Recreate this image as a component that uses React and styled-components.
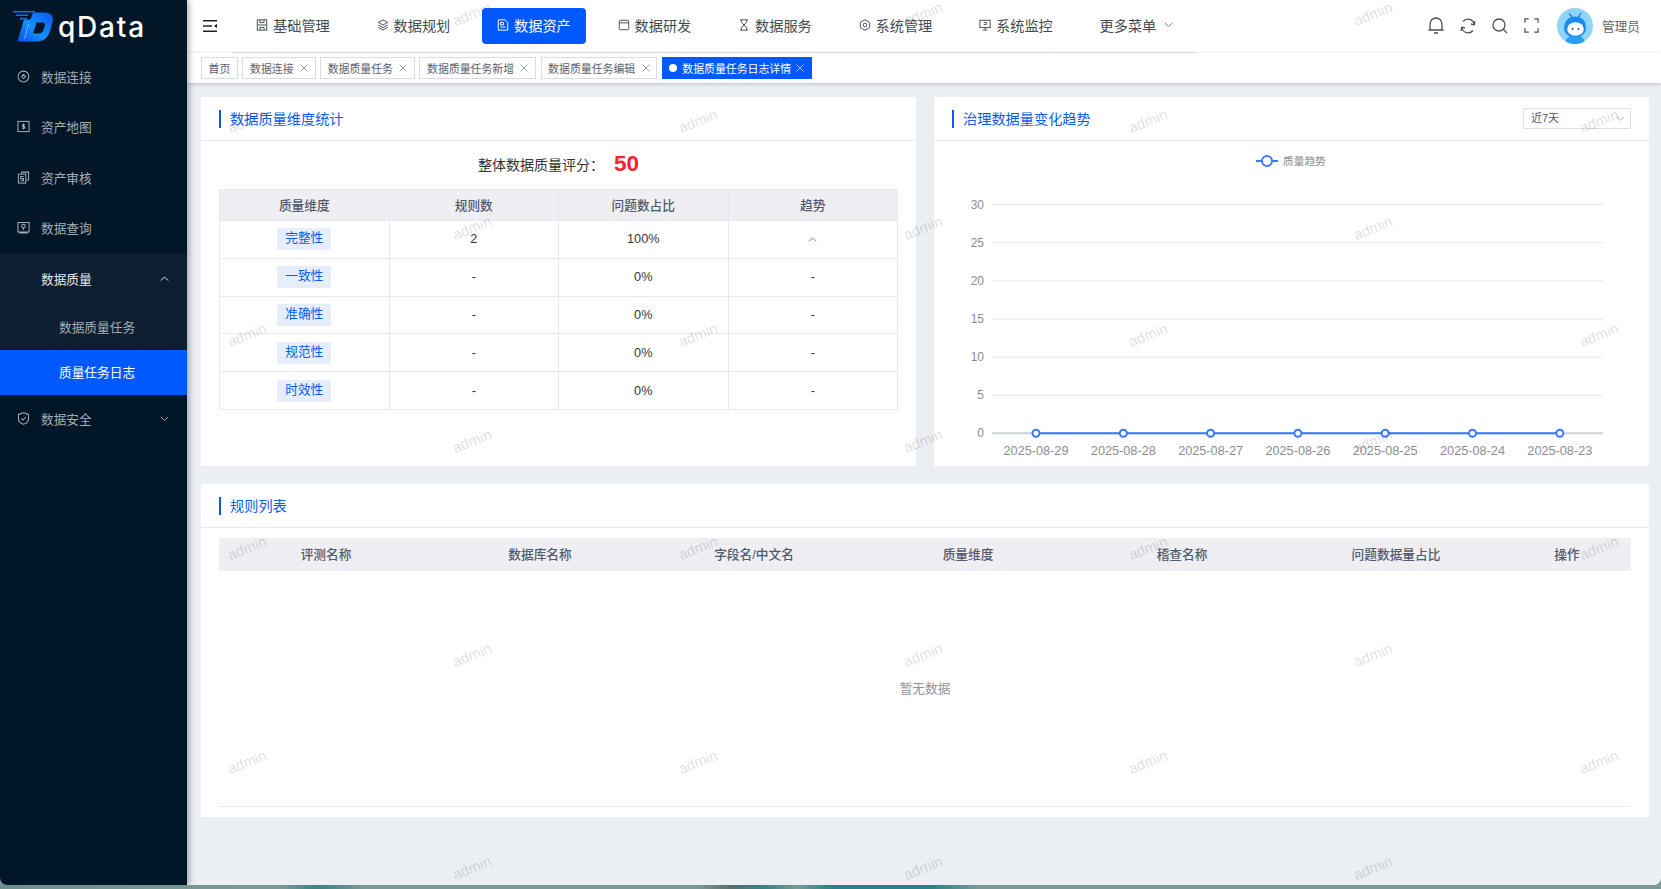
import styled, { createGlobalStyle } from "styled-components"

const GlobalStyle = createGlobalStyle`
  html, body {
    margin: 0;
    padding: 0;
    height: 889px;
    overflow: hidden;
    background: linear-gradient(90deg, #6f8f8d 0%, #7b9997 17%, #3f7f82 19%, #7b9997 22%, #7b9997 42%, #5d6f70 44%, #3a8087 46%, #7b9997 48%, #2f7f88 50%, #2f7f88 56%, #7b9997 59%, #7b9997 100%);
  }
  * { box-sizing: border-box; }
  body {
    font-family: "Liberation Sans", "Noto Sans CJK SC", sans-serif;
    color: #515a6e;
  }
`

const sideMenus = [
  { name: "数据连接", icon: "link" },
  { name: "资产地图", icon: "map" },
  { name: "资产审核", icon: "audit" },
  { name: "数据查询", icon: "query" },
]

const navItems = [
  { name: "基础管理", icon: "disk" },
  { name: "数据规划", icon: "layers" },
  { name: "数据资产", icon: "asset", active: true },
  { name: "数据研发", icon: "panel" },
  { name: "数据服务", icon: "hourglass" },
  { name: "系统管理", icon: "hex" },
  { name: "系统监控", icon: "monitor" },
]

const tabs = ["数据连接", "数据质量任务", "数据质量任务新增", "数据质量任务编辑"]

const dimensions = [
  { name: "完整性", rules: "2", ratio: "100%", up: true },
  { name: "一致性", rules: "-", ratio: "0%" },
  { name: "准确性", rules: "-", ratio: "0%" },
  { name: "规范性", rules: "-", ratio: "0%" },
  { name: "时效性", rules: "-", ratio: "0%" },
]

const ruleColumns = ["评测名称", "数据库名称", "字段名/中文名", "质量维度", "稽查名称", "问题数据量占比", "操作"]

const dates = ["2025-08-29", "2025-08-28", "2025-08-27", "2025-08-26", "2025-08-25", "2025-08-24", "2025-08-23"]

const iconPaths = {
  link: (
    <>
      <circle cx="7" cy="7" r="5.8" />
      <path d="M7 4.8 9.2 7 7 9.2 4.8 7Z" />
    </>
  ),
  map: (
    <>
      <rect x="1" y="1.5" width="12" height="11" />
      <path d="M8.6 5H6.2v2h2v2H5.6M7 3.8v6.4" />
    </>
  ),
  audit: (
    <>
      <path d="M5 3V1.2h7.5v8.6H10" />
      <rect x="1.5" y="3.4" width="8" height="9.6" />
      <path d="M7.2 6H4v2.2h3v2.3H3.8" />
    </>
  ),
  query: (
    <>
      <path d="M1 1.5h12v10.4H1ZM2.5 13h9" />
      <circle cx="7" cy="5.5" r="1.9" />
      <path d="M7 7.4v2.4" />
    </>
  ),
  shield: (
    <>
      <path d="M7 .9 12.4 2.6v4.6c0 3-2.4 4.9-5.4 6C4 12.1 1.6 10.2 1.6 7.2V2.6Z" />
      <path d="M4.6 6.8 6.5 8.7 9.6 5.4" />
    </>
  ),
  disk: (
    <>
      <rect x="1.5" y="1" width="11" height="12" />
      <path d="M1.5 7h11M4.6 1v3h4.8V1M4.6 13V9.8h4.8V13" />
    </>
  ),
  layers: (
    <>
      <path d="M7 1 12.5 4 7 7 1.5 4Z" />
      <path d="M1.5 7 7 10 12.5 7M1.5 9.8 7 12.8 12.5 9.8" />
    </>
  ),
  asset: (
    <>
      <path d="M1.5 1h8l3 3v9h-11Z" />
      <path d="M4 4h3.5v3H4ZM4 9.5h6" />
    </>
  ),
  panel: (
    <>
      <rect x="1.5" y="1.5" width="11" height="11" rx="1" />
      <path d="M1.5 4.5h11" />
    </>
  ),
  hourglass: <path d="M2.5 1h9M2.5 13h9M3.8 1v2.5L7 7l3.2-3.5V1M3.8 13v-2.5L7 7l3.2 3.5V13" />,
  hex: (
    <>
      <path d="M7 .8 12.5 4v6L7 13.2 1.5 10V4Z" />
      <circle cx="7" cy="7" r="2.2" />
    </>
  ),
  monitor: (
    <>
      <rect x="1" y="1.5" width="12" height="8.5" />
      <path d="M7 10v2.5M4 12.8h6M5.5 4h3v2.5h-3" />
    </>
  ),
}

function Icon({ name, size = 14 }) {
  return (
    <IconSvg viewBox="0 0 14 14" width={size} height={size}>
      {iconPaths[name]}
    </IconSvg>
  )
}

function Chevron({ up, size = 9 }) {
  return (
    <IconSvg viewBox="0 0 10 6" width={size} height={size * 0.6}>
      <path d={up ? "M1 5 5 1 9 5" : "M1 1 5 5 9 1"} />
    </IconSvg>
  )
}

function Cross() {
  return (
    <CrossSvg viewBox="0 0 8 8" width={8} height={8}>
      <path d="M.6.6 7.4 7.4M7.4.6.6 7.4" />
    </CrossSvg>
  )
}

function Logo() {
  return (
    <svg viewBox="0 0 42 32" width="42" height="32">
      <defs>
        <linearGradient id="logoBlue" x1="0" y1="1" x2="1" y2="0">
          <stop offset="0" stopColor="#0a4df0" />
          <stop offset="0.45" stopColor="#1492ff" />
          <stop offset="1" stopColor="#0a55ee" />
        </linearGradient>
      </defs>
      <path d="M0 0h22v1.6H0ZM3 3.4h12v1.6H3ZM7 6.8h7v1.6H7Z" fill="#1668f5" />
      <path
        fillRule="evenodd"
        fill="url(#logoBlue)"
        d="M11 8.5H17.5L20 1.5H31C38 1.5 41 5 39.5 11L37 20C35 27 30 30.5 24 30.5H4.5ZM23.5 11.5H29.5C31.5 11.5 32.5 12.5 32 14.5L30.5 19C29.8 21 28 22.5 26 22.5H20Z"
      />
      <path d="M15.5 13 11.5 28" stroke="#63b8ff" strokeWidth="1" fill="none" />
    </svg>
  )
}

function Avatar() {
  return (
    <AvatarSvg viewBox="0 0 36 36" width="36" height="36">
      <rect width="36" height="36" fill="#8ed4fb" />
      <path d="M8 36c0-6 5-9 10-9s10 3 10 9Z" fill="#2b9df2" />
      <path d="M12 5.5 15 9M24 5 21.5 9" stroke="#1276d8" strokeWidth="1.2" fill="none" />
      <path d="M7 20c0-7 5-11.5 11-11.5S29 12 29 20c0 6-5 9-11 9S7 26 7 20Z" fill="#1b8cee" />
      <ellipse cx="18.5" cy="21" rx="8.3" ry="6.8" fill="#fff" />
      <circle cx="15.5" cy="21" r="0.9" fill="#23405e" />
      <circle cx="21.5" cy="21" r="0.9" fill="#23405e" />
    </AvatarSvg>
  )
}

function TrendChart() {
  const yTicks = [30, 25, 20, 15, 10, 5, 0]
  const left = 58
  const right = 669
  const zeroY = 292.3
  const step = 38.1
  const firstX = 102
  const gapX = 87.3
  const points = dates.map((d, i) => firstX + i * gapX)

  return (
    <ChartSvg viewBox="0 0 715 325" width="715" height="325">
      <path d="M322 20H344" stroke="#3a78ff" strokeWidth="2" />
      <circle cx="333" cy="20" r="5" fill="#fff" stroke="#3a78ff" strokeWidth="2" />
      <ChartText x="349" y="24" fontSize="10.7">质量趋势</ChartText>
      {yTicks.map((tick, i) => {
        const y = zeroY - (6 - i) * step
        return (
          <g key={tick}>
            <line x1={left} x2={right} y1={y} y2={y} stroke={tick === 0 ? "#ccd0d6" : "#e3e7f1"} strokeWidth={tick === 0 ? 2 : 1} />
            <ChartText x={left - 8} y={y + 4} fontSize="12" textAnchor="end">{tick}</ChartText>
          </g>
        )
      })}
      <line x1={firstX} x2={points[6]} y1={zeroY} y2={zeroY} stroke="#3a78ff" strokeWidth="2" />
      {points.map((x, i) => (
        <g key={dates[i]}>
          <circle cx={x} cy={zeroY} r="3.5" fill="#fff" stroke="#3a78ff" strokeWidth="2" />
          <ChartText x={x} y={zeroY + 22} fontSize="12.7" textAnchor="middle">{dates[i]}</ChartText>
        </g>
      ))}
    </ChartSvg>
  )
}

function App() {
  const markRows = Array.from({ length: 9 }, (_, i) => i)

  return (
    <>
      <GlobalStyle />
      <StWindow>
        <StSidebar>
          <StLogoRow>
            <Logo />
            <StLogoText>qData</StLogoText>
          </StLogoRow>
          {sideMenus.map((menu) => (
            <StMenuItem key={menu.name}>
              <Icon name={menu.icon} size={13} />
              <span>{menu.name}</span>
            </StMenuItem>
          ))}
          <StMenuGroup>
            <StMenuItem $open>
              <StIconGap />
              <span>数据质量</span>
              <StMenuArrow><Chevron up /></StMenuArrow>
            </StMenuItem>
            <StSubItem>数据质量任务</StSubItem>
            <StSubItem $active>质量任务日志</StSubItem>
          </StMenuGroup>
          <StMenuItem>
            <Icon name="shield" size={13} />
            <span>数据安全</span>
            <StMenuArrow><Chevron /></StMenuArrow>
          </StMenuItem>
        </StSidebar>

        <StMain>
          <StHeader>
            <StToggle>
              <svg viewBox="0 0 14 12" width="14" height="12">
                <path d="M0 .75h14M0 6h9M0 11.25h14" stroke="#1f2329" strokeWidth="1.5" />
                <path d="M14 3.8 11 6l3 2.2Z" fill="#1f2329" />
              </svg>
            </StToggle>
            <StNav>
              {navItems.map((item) => (
                <StNavItem key={item.name} $active={item.active}>
                  <Icon name={item.icon} size={12} />
                  <span>{item.name}</span>
                </StNavItem>
              ))}
              <StNavItem>
                <span>更多菜单</span>
                <StMoreArrow><Chevron /></StMoreArrow>
              </StNavItem>
            </StNav>
            <StTools>
              <StToolIcon>
                <svg viewBox="0 0 16 17" width="16" height="17">
                  <path d="M2 13V7a6 6 0 0 1 12 0v6M.5 13h15M6 16h4" />
                </svg>
              </StToolIcon>
              <StToolIcon>
                <svg viewBox="0 0 16 16" width="16" height="16">
                  <path d="M3 3.5A6.5 6.5 0 0 1 14.3 6.5M13 12.5A6.5 6.5 0 0 1 1.7 9.5" />
                  <path d="M14.8 3.2 14.3 6.8 11 6M1.2 12.8 1.7 9.2 5 10" />
                </svg>
              </StToolIcon>
              <StToolIcon>
                <svg viewBox="0 0 16 16" width="16" height="16">
                  <circle cx="7" cy="7" r="6" />
                  <path d="M11.5 11.5 15 15" />
                </svg>
              </StToolIcon>
              <StToolIcon>
                <svg viewBox="0 0 16 16" width="15" height="15">
                  <path d="M1 5V1h4M11 1h4v4M15 11v4h-4M5 15H1v-4" />
                </svg>
              </StToolIcon>
              <Avatar />
              <StUserName>管理员</StUserName>
            </StTools>
          </StHeader>

          <StTabBar>
            <StTab>首页</StTab>
            {tabs.map((tab) => (
              <StTab key={tab}>
                {tab}
                <Cross />
              </StTab>
            ))}
            <StTab $active>
              <StTabDot />
              数据质量任务日志详情
              <Cross />
            </StTab>
          </StTabBar>

          <StContent>
            <StTopRow>
              <StCard>
                <StCardHead>
                  <StCardTitle>数据质量维度统计</StCardTitle>
                </StCardHead>
                <StScoreRow>
                  整体数据质量评分：
                  <StScore>50</StScore>
                </StScoreRow>
                <StTableWrap>
                  <StDimTable>
                    <thead>
                      <tr>
                        <th>质量维度</th>
                        <th>规则数</th>
                        <th>问题数占比</th>
                        <th>趋势</th>
                      </tr>
                    </thead>
                    <tbody>
                      {dimensions.map((row) => (
                        <tr key={row.name}>
                          <td><StDimTag>{row.name}</StDimTag></td>
                          <td>{row.rules}</td>
                          <td>{row.ratio}</td>
                          <td>{row.up ? <StTrendUp><Chevron up size={9} /></StTrendUp> : "-"}</td>
                        </tr>
                      ))}
                    </tbody>
                  </StDimTable>
                </StTableWrap>
              </StCard>

              <StCard>
                <StCardHead>
                  <StCardTitle>治理数据量变化趋势</StCardTitle>
                  <StSelect>
                    近7天
                    <StSelectArrow><Chevron size={9} /></StSelectArrow>
                  </StSelect>
                </StCardHead>
                <TrendChart />
              </StCard>
            </StTopRow>

            <StRuleCard>
              <StCardHead>
                <StCardTitle>规则列表</StCardTitle>
              </StCardHead>
              <StRuleHead>
                {ruleColumns.map((col) => (
                  <div key={col}>{col}</div>
                ))}
              </StRuleHead>
              <StEmpty>暂无数据</StEmpty>
            </StRuleCard>
          </StContent>

          <StWatermarks>
            {markRows.map((row) => (
              <StMarkRow key={row} $shifted={row % 2 === 1}>
                {Array.from({ length: row % 2 === 1 ? 4 : 3 }, (_, col) => (
                  <StMark key={col}><span>admin</span></StMark>
                ))}
              </StMarkRow>
            ))}
          </StWatermarks>
        </StMain>
      </StWindow>
    </>
  )
}

export default App

const IconSvg = styled.svg`
  flex: none;
  fill: none;
  stroke: currentColor;
  stroke-width: 1.1;
`

const CrossSvg = styled.svg`
  flex: none;
  fill: none;
  stroke: currentColor;
  stroke-width: 0.8;
  opacity: 0.8;
`

const AvatarSvg = styled.svg`
  flex: none;
  border-radius: 50%;
  margin-left: 2px;
`

const ChartSvg = styled.svg`
  display: block;
`

const ChartText = styled.text`
  fill: #8a8d93;
  font-family: "Liberation Sans", "Noto Sans CJK SC", sans-serif;
`

const StWindow = styled.div`
  display: flex;
  width: 1661px;
  height: 885px;
  overflow: hidden;
  border-radius: 0 0 7px 7px;
  background: #ebeef2;
`

const StSidebar = styled.aside`
  flex: none;
  width: 187px;
  background: #011627;
  box-shadow: 2px 0 6px rgba(0, 21, 41, 0.35);
  color: #a5acb4;
  font-size: 12.7px;
  z-index: 2;
`

const StLogoRow = styled.div`
  display: flex;
  align-items: center;
  height: 52px;
  padding: 2px 0 0 13px;
`

const StLogoText = styled.div`
  margin: -1px 0 0 3px;
  color: #fff;
  font-family: Inter, sans-serif;
  font-size: 28px;
  font-weight: 500;
  letter-spacing: 1.8px;
`

const StMenuItem = styled.div`
  display: flex;
  align-items: center;
  gap: 11px;
  height: 50.5px;
  padding: 0 18px 2px 17px;
  color: ${(props) => (props.$open ? "#e6e8eb" : "#a5acb4")};
`

const StIconGap = styled.span`
  width: 13px;
`

const StMenuArrow = styled.span`
  display: flex;
  margin-left: auto;
`

const StMenuGroup = styled.div`
  background: #0c1e2f;
`

const StSubItem = styled.div`
  display: flex;
  align-items: center;
  height: 45px;
  padding: 0 0 2px 59px;
  background: ${(props) => (props.$active ? "#0059ff" : "transparent")};
  color: ${(props) => (props.$active ? "#fff" : "#a5acb4")};
`

const StMain = styled.main`
  position: relative;
  flex: 1;
  min-width: 0;
  display: flex;
  flex-direction: column;
`

const StHeader = styled.header`
  display: flex;
  height: 53px;
  padding-left: 16px;
  background: #fff;
  box-shadow: 0 1px 2px rgba(0, 21, 41, 0.05);
`

const StToggle = styled.div`
  display: flex;
  align-items: center;
  width: 29px;
  padding-bottom: 1px;
`

const StNav = styled.nav`
  display: flex;
  gap: 16.5px;
  width: 964px;
  padding: 8px 0 0 9px;
  border-bottom: 1px solid #dcdfe6;
`

const StNavItem = styled.div`
  display: flex;
  align-items: center;
  gap: 5px;
  width: 104px;
  height: 36px;
  padding: 0 0 2px 15px;
  border-radius: 4px;
  background: ${(props) => (props.$active ? "#0059ff" : "transparent")};
  color: ${(props) => (props.$active ? "#fff" : "#444a52")};
  font-size: 14.2px;
  white-space: nowrap;
`

const StMoreArrow = styled.span`
  display: flex;
  margin-left: 3px;
  color: #888;
`

const StTools = styled.div`
  display: flex;
  align-items: center;
  gap: 16px;
  margin-left: auto;
  padding: 0 21px 2px 0;
`

const StToolIcon = styled.div`
  display: flex;
  color: #4a4f57;

  svg {
    fill: none;
    stroke: currentColor;
    stroke-width: 1.3;
  }
`

const StUserName = styled.div`
  margin-left: -7px;
  color: #5f6570;
  font-size: 12.7px;
`

const StTabBar = styled.div`
  display: flex;
  align-items: center;
  gap: 4.5px;
  height: 30px;
  padding: 0 14px;
  background: #fff;
  box-shadow: 0 1px 4px rgba(0, 21, 41, 0.22);
  z-index: 1;
`

const StTab = styled.div`
  display: flex;
  align-items: center;
  gap: ${(props) => (props.$active ? "5px" : "6.3px")};
  height: 22px;
  padding: 0 6.6px;
  border: 1px solid ${(props) => (props.$active ? "#0059ff" : "#d8dce5")};
  background: ${(props) => (props.$active ? "#0059ff" : "#fff")};
  color: ${(props) => (props.$active ? "#fff" : "#5a6170")};
  font-size: 10.9px;
  white-space: nowrap;
`

const StTabDot = styled.span`
  width: 8px;
  height: 8px;
  border-radius: 50%;
  background: #fff;
`

const StContent = styled.div`
  display: flex;
  flex-direction: column;
  gap: 18px;
  padding: 14px 12px 0 14px;
`

const StTopRow = styled.div`
  display: grid;
  grid-template-columns: 715px 715px;
  gap: 18px;
`

const StCard = styled.section`
  height: 369px;
  background: #fff;
`

const StCardHead = styled.div`
  display: flex;
  align-items: center;
  justify-content: space-between;
  height: 44px;
  padding: 0 18px;
  border-bottom: 1px solid #e8eaec;
`

const StCardTitle = styled.div`
  padding-left: 9px;
  border-left: 2px solid #0059ff;
  color: #0a5cf5;
  font-size: 14.2px;
  line-height: 18px;
`

const StSelect = styled.div`
  position: relative;
  width: 108px;
  height: 21px;
  padding-left: 7px;
  border: 1px solid #dcdee2;
  border-radius: 2px;
  color: #515a6e;
  font-size: 11px;
  line-height: 19px;
`

const StSelectArrow = styled.span`
  display: flex;
  position: absolute;
  top: 7px;
  right: 5px;
  color: #b5b9c0;
`

const StScoreRow = styled.div`
  display: flex;
  align-items: center;
  justify-content: center;
  height: 48px;
  padding-bottom: 2px;
  color: #333;
  font-size: 14px;
`

const StScore = styled.span`
  margin-left: 10px;
  color: #ff1f2f;
  font-size: 22.5px;
  font-weight: 700;
`

const StTableWrap = styled.div`
  padding: 0 18px;
`

const StDimTable = styled.table`
  width: 100%;
  border-collapse: collapse;
  table-layout: fixed;
  font-size: 12.7px;
  text-align: center;

  th, td {
    border: 1px solid #e6e8f2;
    padding: 0;
  }

  th {
    height: 31px;
    padding-bottom: 1px;
    background: #eeeef3;
    color: #515a6e;
    font-weight: 500;
  }

  td {
    height: 37.8px;
    color: #33373d;
  }
`

const StDimTag = styled.span`
  display: inline-block;
  width: 54px;
  height: 22px;
  border-radius: 2px;
  background: #e6edfc;
  color: #0a5cf5;
  line-height: 21px;
  vertical-align: middle;
`

const StTrendUp = styled.span`
  display: inline-flex;
  vertical-align: middle;
  color: #3fa45a;
`

const StRuleCard = styled.section`
  display: flex;
  flex-direction: column;
  height: 333px;
  padding-bottom: 10px;
  background: #fff;
`

const StRuleHead = styled.div`
  display: grid;
  grid-template-columns: repeat(6, 214px) 128px;
  align-items: center;
  height: 33px;
  margin: 10px 18px 0;
  padding-bottom: 3px;
  background: #eeeef3;
  color: #515a6e;
  font-size: 12.7px;
  font-weight: 500;
  text-align: center;
`

const StEmpty = styled.div`
  flex: 1;
  display: flex;
  align-items: center;
  justify-content: center;
  margin: 0 18px;
  padding-bottom: 2px;
  border-bottom: 1px solid #e8eaec;
  color: #909399;
  font-size: 12.7px;
`

const StWatermarks = styled.div`
  position: absolute;
  inset: 0;
  z-index: 3;
  overflow: hidden;
  pointer-events: none;
`

const StMarkRow = styled.div`
  display: flex;
  align-items: center;
  height: 106.75px;
  padding-left: ${(props) => (props.$shifted ? "40px" : "265px")};
  transform: translateY(-39px);
`

const StMark = styled.div`
  flex: 0 0 450.5px;

  span {
    display: inline-block;
    color: rgba(0, 0, 0, 0.14);
    font-size: 14.8px;
    line-height: 1;
    transform: rotate(-22deg);
  }
`
